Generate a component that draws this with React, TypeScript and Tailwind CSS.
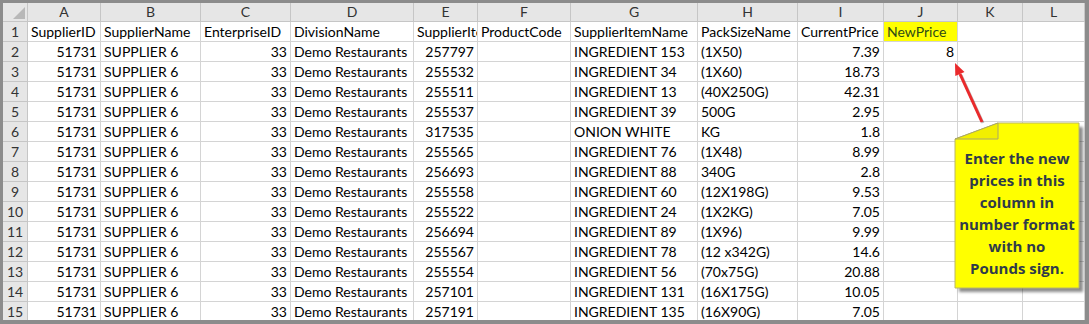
const COLS = ['A', 'B', 'C', 'D', 'E', 'F', 'G', 'H', 'I', 'J', 'K', 'L'];

// alignment per column: r = number (right), l = text
const ALIGN = ['r', 'l', 'r', 'l', 'r', 'l', 'l', 'l', 'r', 'r', 'l', 'l'];

const HEADERS = [
  'SupplierID',
  'SupplierName',
  'EnterpriseID',
  'DivisionName',
  'SupplierItemID',
  'ProductCode',
  'SupplierItemName',
  'PackSizeName',
  'CurrentPrice',
  'NewPrice',
  '',
  '',
];

const ITEMS: [string, string, string, string, string?][] = [
  ['257797', 'INGREDIENT 153', '(1X50)', '7.39', '8'],
  ['255532', 'INGREDIENT 34', '(1X60)', '18.73'],
  ['255511', 'INGREDIENT 13', '(40X250G)', '42.31'],
  ['255537', 'INGREDIENT 39', '500G', '2.95'],
  ['317535', 'ONION WHITE', 'KG', '1.8'],
  ['255565', 'INGREDIENT 76', '(1X48)', '8.99'],
  ['256693', 'INGREDIENT 88', '340G', '2.8'],
  ['255558', 'INGREDIENT 60', '(12X198G)', '9.53'],
  ['255522', 'INGREDIENT 24', '(1X2KG)', '7.05'],
  ['256694', 'INGREDIENT 89', '(1X96)', '9.99'],
  ['255567', 'INGREDIENT 78', '(12 x342G)', '14.6'],
  ['255554', 'INGREDIENT 56', '(70x75G)', '20.88'],
  ['257101', 'INGREDIENT 131', '(16X175G)', '10.05'],
  ['257191', 'INGREDIENT 135', '(16X90G)', '7.05'],
];

const rows: string[][] = [
  HEADERS,
  ...ITEMS.map(([id, name, pack, price, next]) => [
    '51731',
    'SUPPLIER 6',
    '33',
    'Demo Restaurants',
    id,
    '',
    name,
    pack,
    price,
    next ?? '',
    '',
    '',
  ]),
];

function Callout() {
  return (
    <>
      <svg
        className="absolute left-[940px] top-[55px]"
        width="149"
        height="245"
        viewBox="940 55 149 245"
      >
        <defs>
          <filter id="soft" x="-20%" y="-20%" width="140%" height="140%">
            <feGaussianBlur stdDeviation="1.5" />
          </filter>
        </defs>
        <polygon
          points="1001,127 1083,127 1083,292 959,292 959,143"
          fill="rgba(0,0,0,0.45)"
          filter="url(#soft)"
        />
        <polygon
          points="998,123 1079,123 1079,288 955,288 955,139"
          fill="#ffff00"
          stroke="#b9b66a"
          strokeWidth="1"
        />
        <polygon points="998,123 998,139 955,139" fill="#f2ef00" stroke="#a9a66a" strokeWidth="1" />
        <line x1="982" y1="122" x2="960" y2="74" stroke="rgba(0,0,0,0.25)" strokeWidth="3" transform="translate(1 1)" />
        <line x1="982" y1="122" x2="960" y2="74" stroke="#ea2a2c" strokeWidth="3" />
        <polygon points="955,63 964.5,71.9 955.3,76" fill="#ea2a2c" />
      </svg>
      <div className="absolute left-[955px] top-[147px] w-[124px] text-center font-['Open_Sans',sans-serif] text-[15px] font-bold leading-[22px] text-[#2f3a4a]">
        Enter the new
        <br />
        prices in this
        <br />
        column in
        <br />
        number format
        <br />
        with no
        <br />
        Pounds sign.
      </div>
    </>
  );
}

export default function App() {
  return (
    <div className="relative h-[324px] w-[1089px] overflow-hidden bg-[#8c8c8c] pb-[4px] pl-[3px] pr-[4px] pt-[3px]">
      <div className="grid h-[317px] grid-cols-[25px_73px_100px_90px_123px_64px_93px_127px_100px_86px_74px_65px_62px] grid-rows-[19px_repeat(15,20px)] overflow-hidden bg-white font-['Lato',sans-serif] text-[14px] text-black">
        {/* select-all corner */}
        <div className="relative border-b border-r border-[#c6c6c6] bg-[#e6e6e6]">
          <div className="absolute bottom-[2px] right-[2px] h-0 w-0 border-b-[12px] border-l-[12px] border-b-[#b8b8b8] border-l-transparent" />
        </div>
        {COLS.map((c) => (
          <div
            key={c}
            className="flex items-center justify-center border-b border-r border-[#c6c6c6] bg-[#e6e6e6] leading-[18px] text-[#333]"
          >
            {c}
          </div>
        ))}

        {rows.map((r, ri) => (
          <div key={ri} className="contents">
            <div className="flex items-center justify-center border-b border-r border-[#c6c6c6] bg-[#e6e6e6] leading-[19px] text-[#333]">
              {ri + 1}
            </div>
            {r.map((v, ci) => {
              const isNewPriceHead = ri === 0 && ci === 9;
              return (
                <div
                  key={ci}
                  className={`overflow-hidden whitespace-nowrap border-b border-r border-[#d4d4d4] px-[3px] leading-[19px] ${
                    ALIGN[ci] === 'r' && ri > 0 ? 'text-right' : 'text-left'
                  } ${isNewPriceHead ? 'bg-[#ffff00] text-[#2e4a17]' : ''}`}
                >
                  {v}
                </div>
              );
            })}
          </div>
        ))}
      </div>
      <Callout />
    </div>
  );
}
